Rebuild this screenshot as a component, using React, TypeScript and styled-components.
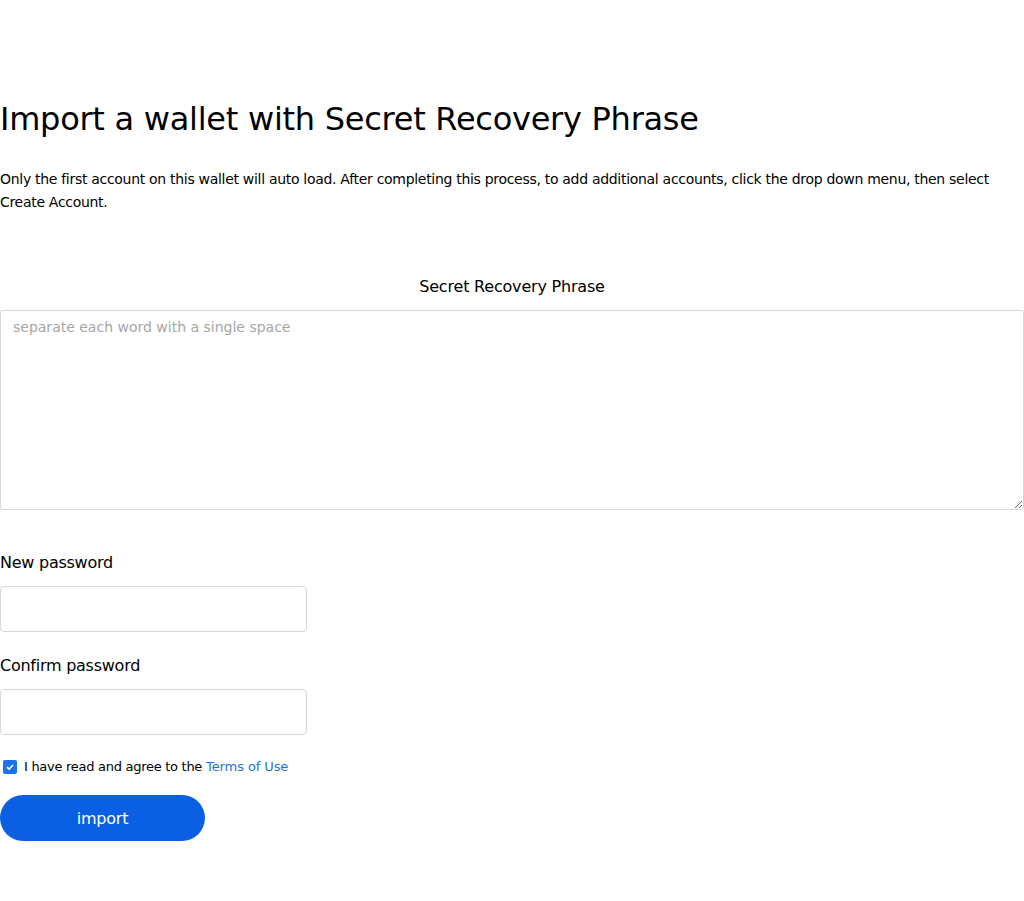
import React from "react";
import styled, { createGlobalStyle } from "styled-components";

const Global = createGlobalStyle`
  html, body { margin: 0; padding: 0; background: #fff; }
  body { font-family: "DejaVu Sans", sans-serif; color: #000; }
  * { box-sizing: border-box; }
`;

const Page = styled.main`
  display: flex;
  flex-direction: column;
  padding-top: 98px;
  width: 1024px;
`;

const Title = styled.h1`
  margin: 0;
  font-size: 32px;
  font-weight: 400;
  line-height: 42px;
  letter-spacing: -0.26px;
`;

const Intro = styled.p`
  margin: 28px 0 0;
  font-size: 14px;
  line-height: 23px;
  letter-spacing: -0.3px;
`;

const PhraseLabel = styled.label`
  display: block;
  margin-top: 61px;
  text-align: center;
  font-size: 16px;
  line-height: 24px;
  letter-spacing: -0.2px;
`;

const PhraseArea = styled.textarea`
  display: block;
  margin-top: 11px;
  width: 1024px;
  height: 200px;
  padding: 6px 12px;
  border: 1px solid #d6d6d6;
  border-radius: 2px;
  font-family: "DejaVu Sans", sans-serif;
  font-size: 14px;
  line-height: 20px;
  resize: vertical;
  &::placeholder { color: #a6a6a6; }
`;

const Field = styled.div<{ $top: number }>`
  display: flex;
  flex-direction: column;
  gap: 13px;
  margin-top: ${(p) => p.$top}px;
`;

const FieldLabel = styled.label`
  font-size: 16px;
  line-height: 20px;
  letter-spacing: -0.25px;
`;

const PasswordInput = styled.input`
  width: 307px;
  height: 46px;
  border: 1px solid #d6d6d6;
  border-radius: 4px;
  padding: 0 12px;
  font-size: 14px;
`;

const Agree = styled.label`
  display: flex;
  align-items: center;
  gap: 7px;
  margin-top: 24px;
  padding-left: 3px;
  font-size: 13px;
  line-height: 16px;
  letter-spacing: -0.28px;
`;

const Box = styled.span`
  width: 14px;
  height: 14px;
  border-radius: 2px;
  background: #1a73e8;
  display: inline-flex;
  align-items: center;
  justify-content: center;
`;

const TermsLink = styled.a`
  color: #1a73e8;
  text-decoration: none;
  margin-left: 4px;
  letter-spacing: -0.1px;
`;

const ImportButton = styled.button`
  margin-top: 20px;
  width: 205px;
  height: 46px;
  border: none;
  border-radius: 23px;
  background: #0a5fe2;
  color: #fff;
  font-family: "DejaVu Sans", sans-serif;
  font-size: 16px;
  letter-spacing: -0.2px;
  cursor: pointer;
`;

export default function App() {
  return (
    <>
      <Global />
      <Page>
        <Title>Import a wallet with Secret Recovery Phrase</Title>
        <Intro>
          Only the first account on this wallet will auto load. After completing this process, to add additional accounts, click the drop down menu, then select Create Account.
        </Intro>
        <PhraseLabel htmlFor="phrase">Secret Recovery Phrase</PhraseLabel>
        <PhraseArea id="phrase" placeholder="separate each word with a single space" />
        <Field $top={43}>
          <FieldLabel>New password</FieldLabel>
          <PasswordInput type="password" />
        </Field>
        <Field $top={24}>
          <FieldLabel>Confirm password</FieldLabel>
          <PasswordInput type="password" />
        </Field>
        <Agree>
          <Box>
            <svg width="10" height="10" viewBox="0 0 10 10">
              <path d="M2 5.2 L4.1 7.2 L8 3" stroke="#fff" strokeWidth="1.6" fill="none" />
            </svg>
          </Box>
          <span>
            I have read and agree to the
            <TermsLink href="#">Terms of Use</TermsLink>
          </span>
        </Agree>
        <ImportButton>import</ImportButton>
      </Page>
    </>
  );
}
